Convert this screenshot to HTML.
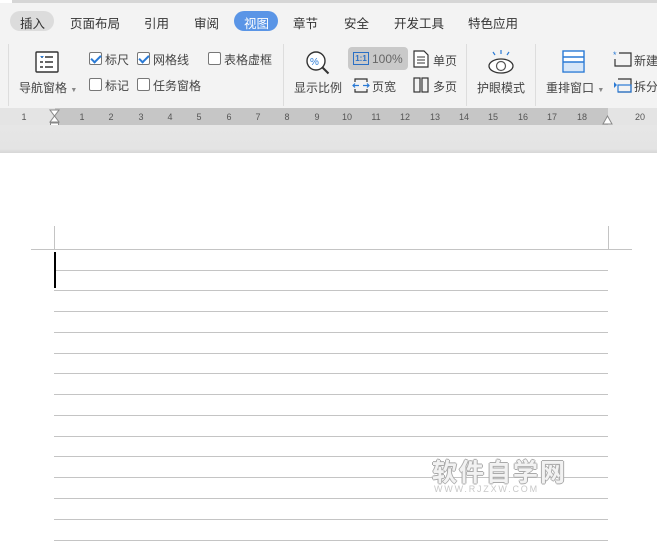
<!DOCTYPE html>
<html><head><meta charset="utf-8"><style>
*{margin:0;padding:0;box-sizing:border-box}
body{width:657px;height:550px;overflow:hidden;background:#fff;font-family:"Liberation Sans","Noto Sans CJK SC",sans-serif;position:relative;color:#333}
.a{position:absolute;white-space:nowrap}
.t{font-size:12.5px;color:#333;top:13px}
.r{font-size:12px;color:#444}
.cb{position:absolute;width:13px;height:13px;border:1px solid #777;border-radius:2px;background:#fff}
.ck::after{content:"";position:absolute;left:3px;top:0px;width:4px;height:8px;border:solid #2a7ad5;border-width:0 2px 2px 0;transform:rotate(45deg)}
.n{position:absolute;top:112px;font-size:9px;color:#555;width:20px;text-align:center}
.hl{position:absolute;left:54px;width:554px;height:1px;background:#c4c4c4}
</style></head><body>
<div class="a" style="left:0;top:0;width:657px;height:3px;background:#d6d6d6"></div>
<div class="a" style="left:0;top:0;width:12px;height:3px;background:#fff"></div>
<div class="a" style="left:0;top:3px;width:657px;height:105px;background:#f3f3f3"></div>
<div class="a" style="left:10px;top:11px;width:44px;height:20px;border-radius:10px;background:#dcdcdc"></div>
<div class="a t" style="left:20px">插入</div>
<div class="a t" style="left:70px">页面布局</div>
<div class="a t" style="left:144px">引用</div>
<div class="a t" style="left:194px">审阅</div>
<div class="a" style="left:234px;top:11px;width:44px;height:20px;border-radius:10px;background:#5a95e6"></div>
<div class="a t" style="left:244px;color:#fff">视图</div>
<div class="a t" style="left:293px">章节</div>
<div class="a t" style="left:344px">安全</div>
<div class="a t" style="left:394px">开发工具</div>
<div class="a t" style="left:468px">特色应用</div>
<div class="a" style="left:8px;top:44px;width:1px;height:62px;background:#ddd"></div>
<div class="a" style="left:283px;top:44px;width:1px;height:62px;background:#ddd"></div>
<div class="a" style="left:466px;top:44px;width:1px;height:62px;background:#ddd"></div>
<div class="a" style="left:535px;top:44px;width:1px;height:62px;background:#ddd"></div>
<svg class="a" style="left:35px;top:51px" width="24" height="22"><rect x="1" y="1" width="22" height="20" rx="1" fill="#fff" stroke="#333" stroke-width="1.4"/><path d="M6 6h2M10 6h8M10 11h8M10 16h8M5 11h3M5 16h3" stroke="#333" stroke-width="1.4"/><path d="M5 5l2 2 2-2z" fill="#2a7ad5"/></svg>
<div class="a r" style="left:19px;top:79px">导航窗格 <span style="font-size:7px;color:#888">▼</span></div>
<div class="cb ck" style="left:89px;top:52px"></div><div class="a r" style="left:105px;top:51px">标尺</div>
<div class="cb ck" style="left:137px;top:52px"></div><div class="a r" style="left:153px;top:51px">网格线</div>
<div class="cb" style="left:208px;top:52px"></div><div class="a r" style="left:224px;top:51px">表格虚框</div>
<div class="cb" style="left:89px;top:78px"></div><div class="a r" style="left:105px;top:77px">标记</div>
<div class="cb" style="left:137px;top:78px"></div><div class="a r" style="left:153px;top:77px">任务窗格</div>
<svg class="a" style="left:305px;top:50px" width="26" height="26"><circle cx="11" cy="11" r="9" fill="#fff" stroke="#333" stroke-width="1.4"/><path d="M17.5 17.5l6 6" stroke="#333" stroke-width="2"/><text x="5" y="15" font-size="10" fill="#2a7ad5" font-family="Liberation Sans">%</text></svg>
<div class="a r" style="left:294px;top:79px">显示比例</div>
<div class="a" style="left:348px;top:47px;width:60px;height:23px;border-radius:4px;background:#c9c9c9"></div>
<div class="a" style="left:353px;top:52px;width:16px;height:13px;border:1.3px solid #2a6fc5;font-size:8px;color:#2a6fc5;text-align:center;line-height:11px;font-weight:bold">1:1</div>
<div class="a r" style="left:372px;top:52px;color:#666">100%</div>
<svg class="a" style="left:352px;top:77px" width="18" height="17"><path d="M3 5V2h12v3M3 12v3h12v-3" fill="none" stroke="#333" stroke-width="1.2"/><path d="M1 8.5h6M11 8.5h6M3 6.5l-2 2 2 2M15 6.5l2 2-2 2" fill="none" stroke="#2a7ad5" stroke-width="1.2"/></svg>
<div class="a r" style="left:372px;top:78px">页宽</div>
<svg class="a" style="left:413px;top:50px" width="16" height="18"><path d="M1 1h10l4 4v12H1z" fill="#fff" stroke="#333" stroke-width="1.2"/><path d="M4 7h8M4 10h8M4 13h8" stroke="#333"/></svg>
<div class="a r" style="left:433px;top:52px">单页</div>
<svg class="a" style="left:413px;top:77px" width="16" height="16"><rect x="1" y="1" width="6" height="14" fill="none" stroke="#333" stroke-width="1.2"/><rect x="9" y="1" width="6" height="14" fill="none" stroke="#333" stroke-width="1.2"/></svg>
<div class="a r" style="left:433px;top:78px">多页</div>
<svg class="a" style="left:487px;top:49px" width="28" height="26"><path d="M8 6L6 3M14 5V1M20 6l2-3" stroke="#2a7ad5" stroke-width="1.2"/><ellipse cx="14" cy="17" rx="12" ry="7" fill="#fff" stroke="#333" stroke-width="1.3"/><circle cx="14" cy="17" r="4.5" fill="none" stroke="#555" stroke-width="1.2"/></svg>
<div class="a r" style="left:477px;top:79px">护眼模式</div>
<svg class="a" style="left:562px;top:50px" width="24" height="24"><rect x="1" y="1" width="21" height="21" fill="#fff" stroke="#2a7ad5" stroke-width="1.4"/><rect x="2" y="12" width="19" height="9" fill="#d6e6f8"/><path d="M1 7h21M1 12h21" stroke="#2a7ad5" stroke-width="1.4"/></svg>
<div class="a r" style="left:546px;top:79px">重排窗口 <span style="font-size:7px;color:#888">▼</span></div>
<svg class="a" style="left:613px;top:50px" width="20" height="18"><path d="M6 3h12v13H2V9" fill="none" stroke="#333" stroke-width="1.2"/><text x="0" y="8" font-size="9" fill="#2a7ad5">*</text></svg>
<div class="a r" style="left:634px;top:52px">新建</div>
<svg class="a" style="left:613px;top:77px" width="20" height="17"><path d="M5 2h13v13H5" fill="none" stroke="#333" stroke-width="1.2"/><rect x="5" y="8" width="13" height="7" fill="none" stroke="#2a7ad5" stroke-width="1.2"/><path d="M1 5l3 3-3 3z" fill="#2a7ad5"/></svg>
<div class="a r" style="left:634px;top:78px">拆分</div>
<div class="a" style="left:0;top:108px;width:657px;height:17px;background:#e4e4e4"></div>
<div class="a" style="left:55px;top:108px;width:553px;height:17px;background:#c6c6c6"></div>
<div class="n" style="left:14px">1</div>
<div class="n" style="left:72px">1</div><div class="n" style="left:101px">2</div><div class="n" style="left:131px">3</div><div class="n" style="left:160px">4</div><div class="n" style="left:189px">5</div><div class="n" style="left:219px">6</div><div class="n" style="left:248px">7</div><div class="n" style="left:277px">8</div><div class="n" style="left:307px">9</div><div class="n" style="left:337px">10</div><div class="n" style="left:366px">11</div><div class="n" style="left:395px">12</div><div class="n" style="left:425px">13</div><div class="n" style="left:454px">14</div><div class="n" style="left:483px">15</div><div class="n" style="left:513px">16</div><div class="n" style="left:542px">17</div><div class="n" style="left:572px">18</div><div class="n" style="left:630px">20</div>
<svg class="a" style="left:49px;top:109px" width="12" height="22"><path d="M1 1h9L5.5 7zM1 13h9L5.5 7z" fill="#fff" stroke="#888"/><rect x="1.5" y="14" width="8" height="6" fill="#fff" stroke="#888"/></svg>
<svg class="a" style="left:602px;top:115px" width="12" height="10"><path d="M1 9h9L5.5 1z" fill="#fff" stroke="#888"/></svg>
<div class="a" style="left:0;top:125px;width:657px;height:28px;background:linear-gradient(#e6e6e6,#e4e4e4 85%,#d6d6d6)"></div>
<div class="a" style="left:54px;top:226px;width:1px;height:23px;background:#c4c4c4"></div>
<div class="a" style="left:608px;top:226px;width:1px;height:23px;background:#c4c4c4"></div>
<div class="a" style="left:31px;top:249px;width:601px;height:1px;background:#c4c4c4"></div>
<div class="hl" style="top:270px"></div><div class="hl" style="top:290px"></div><div class="hl" style="top:311px"></div><div class="hl" style="top:332px"></div><div class="hl" style="top:353px"></div><div class="hl" style="top:373px"></div><div class="hl" style="top:394px"></div><div class="hl" style="top:415px"></div><div class="hl" style="top:436px"></div><div class="hl" style="top:456px"></div><div class="hl" style="top:477px"></div><div class="hl" style="top:498px"></div><div class="hl" style="top:519px"></div><div class="hl" style="top:540px"></div>
<div class="a" style="left:54px;top:252px;width:2px;height:36px;background:#000"></div>
<div class="a" style="left:432px;top:453px;font-size:25px;font-weight:bold;color:#f2f2f2;letter-spacing:2px;text-shadow:1px 0 0 #aaa,-1px 0 0 #aaa,0 1px 0 #aaa,0 -1px 0 #aaa">软件自学网</div>
<div class="a" style="left:434px;top:484px;font-size:9px;color:#c8c8c8;letter-spacing:1.8px">WWW.RJZXW.COM</div>
</body></html>
